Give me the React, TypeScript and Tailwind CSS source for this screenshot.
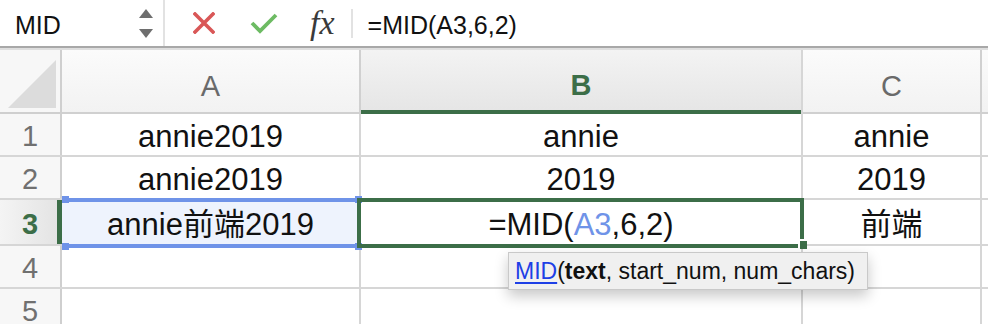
import React from "react";

const cellFont = "font-['Liberation_Sans','Noto_Sans_CJK_SC',sans-serif]";

function FormulaBar() {
  return (
    <div className="flex h-[48px] items-center border-b-2 border-[#a8a8a8] bg-white">
      {/* name box */}
      <div className="flex h-full w-[163px] items-center pl-[15px] pr-[10px]">
        <span className="flex-1 pt-[5px] text-[25px] leading-none text-[#111]">MID</span>
        <div className="flex flex-col items-center gap-[11px]">
          <svg width="14" height="9" viewBox="0 0 14 9">
            <polygon points="7,0 14,9 0,9" fill="#6e6e6e" />
          </svg>
          <svg width="14" height="9" viewBox="0 0 14 9">
            <polygon points="0,0 14,0 7,9" fill="#6e6e6e" />
          </svg>
        </div>
      </div>
      <div className="h-full w-[2px] bg-[#e2e2e2]" />
      {/* cancel / enter / fx */}
      <div className="flex h-full items-center pl-[28px]">
        <svg width="22" height="22" viewBox="0 0 22 22">
          <path d="M2 2 L20 20 M20 2 L2 20" stroke="#d95757" strokeWidth="3.6" strokeLinecap="square" />
        </svg>
        <svg className="ml-[35px]" width="28" height="22" viewBox="0 0 28 22">
          <path d="M2 11 L10 19 L26 3" stroke="#6dbb63" strokeWidth="3.8" fill="none" />
        </svg>
        <span className="ml-[32px] font-['Liberation_Serif',serif] text-[34px] italic leading-none text-[#3a3a3a]">
          fx
        </span>
        <div className="ml-[16px] h-[29px] w-[2px] bg-[#e2e2e2]" />
      </div>
      <span className="ml-[15px] pt-[5px] text-[25px] leading-none text-[#111]">=MID(A3,6,2)</span>
    </div>
  );
}

function Cell({ w, children, className = "" }: { w: string; children?: React.ReactNode; className?: string }) {
  return (
    <div
      className={`flex h-full shrink-0 items-center justify-center border-r-2 border-[#d6d6d6] pt-[4px] text-[31px] leading-none text-[#111] ${w} ${className}`}
    >
      {children}
    </div>
  );
}

function RowHead({ n, active = false }: { n: number; active?: boolean }) {
  return active ? (
    <div className="flex h-full w-[62px] shrink-0 items-center justify-center border-r-[5px] border-[#3c6e48] bg-gradient-to-r from-[#f4f4f4] to-[#e4e4e4] pl-[3px] pt-[4px] text-[29px] font-bold leading-none text-[#3c6e48]">
      {n}
    </div>
  ) : (
    <div className="flex h-full w-[62px] shrink-0 items-center justify-center border-r-2 border-[#cfcfcf] bg-[#f7f7f7] pt-[4px] text-[29px] leading-none text-[#707070]">
      {n}
    </div>
  );
}

function Row({ n, h, cells, active = false }: { n: number; h: string; cells: React.ReactNode[]; active?: boolean }) {
  return (
    <div className={`flex border-b-2 border-[#d6d6d6] ${h}`}>
      <RowHead n={n} active={active} />
      <Cell w="w-[299px]" className={active ? "bg-[#eef3fd]" : ""}>{cells[0]}</Cell>
      <Cell w="w-[442px]">{cells[1]}</Cell>
      <Cell w="w-[179px]">{cells[2]}</Cell>
      <div className="flex-1" />
    </div>
  );
}

function Handle({ className }: { className: string }) {
  return <div className={`absolute h-[7px] w-[7px] bg-[#6f93e8] ${className}`} />;
}

export default function App() {
  return (
    <div className={`relative h-[324px] w-[988px] overflow-hidden bg-white ${cellFont}`}>
      <FormulaBar />
      <div className="h-[2px] bg-[#dedede]" />

      <div className="relative">
        {/* column headers */}
        <div className="flex h-[64px]">
          <div className="flex w-[62px] shrink-0 items-end border-r-2 border-b-2 border-[#cfcfcf] bg-[#f7f7f7] pb-[4px] pl-[8px]">
            <svg width="48" height="48" viewBox="0 0 48 48">
              <polygon points="48,0 48,48 0,48" fill="#dcdcdc" />
            </svg>
          </div>
          <div className="flex w-[299px] shrink-0 items-center justify-center border-r-2 border-b-2 border-[#d0d0d0] bg-gradient-to-b from-[#fbfbfb] to-[#f2f2f2] pt-[10px] text-[29px] leading-none text-[#6a6a6a]">
            A
          </div>
          <div className="flex w-[442px] shrink-0 items-center justify-center border-r-2 border-[#d6d6d6] bg-gradient-to-b from-[#f3f3f3] to-[#e5e5e5]">
            <div className="flex h-full w-full items-center justify-center border-b-[4px] border-[#3c6e48] pt-[10px] text-[29px] font-bold leading-none text-[#3c6e48]">
              B
            </div>
          </div>
          <div className="flex w-[179px] shrink-0 items-center justify-center border-r-2 border-b-2 border-[#d0d0d0] bg-gradient-to-b from-[#fbfbfb] to-[#f2f2f2] pt-[10px] text-[29px] leading-none text-[#6a6a6a]">
            C
          </div>
          <div className="flex-1 border-b-2 border-[#d0d0d0] bg-gradient-to-b from-[#fbfbfb] to-[#f2f2f2]" />
        </div>

        <Row n={1} h="h-[43px]" cells={["annie2019", "annie", "annie"]} />
        <Row n={2} h="h-[43px]" cells={["annie2019", "2019", "2019"]} />
        <Row
          n={3}
          h="h-[46px]"
          active
          cells={[
            "annie前端2019",
            <span key="f">
              =MID(<span className="text-[#6f93e8]">A3</span>,6,2)
            </span>,
            "前端",
          ]}
        />
        <Row n={4} h="h-[43px]" cells={["", "", ""]} />
        <Row n={5} h="h-[43px]" cells={["", "", ""]} />

        {/* A3 selection */}
        <div className="absolute left-[62px] top-[148px] h-[4px] w-[299px] bg-[#6f93e8]" />
        <div className="absolute left-[62px] top-[194px] h-[4px] w-[299px] bg-[#6f93e8]" />
        <Handle className="left-[62px] top-[146px]" />
        <Handle className="left-[62px] top-[193px]" />
        <Handle className="left-[355px] top-[146px]" />
        <Handle className="left-[355px] top-[193px]" />

        {/* B3 active cell */}
        <div className="absolute left-[357px] top-[148px] h-[50px] w-[447px] border-[4px] border-[#3c6e48]" />
        <div className="absolute left-[798px] top-[189px] h-[10px] w-[9px] border-l-2 border-t-2 border-white bg-[#3c6e48]" />

        {/* function tooltip */}
        <div className="absolute left-[508px] top-[202px] flex h-[38px] w-[360px] items-center border border-[#c9c9c9] bg-[#f0f0f0] pl-[6px] text-[23px] leading-none text-[#111] shadow-[0_6px_14px_rgba(0,0,0,0.22)]">
          <span className="text-[#1d3fe6] underline decoration-[1.5px] underline-offset-[3px]">MID</span>
          <span>(</span>
          <span className="font-bold">text</span>
          <span>, start_num, num_chars)</span>
        </div>
      </div>
    </div>
  );
}
